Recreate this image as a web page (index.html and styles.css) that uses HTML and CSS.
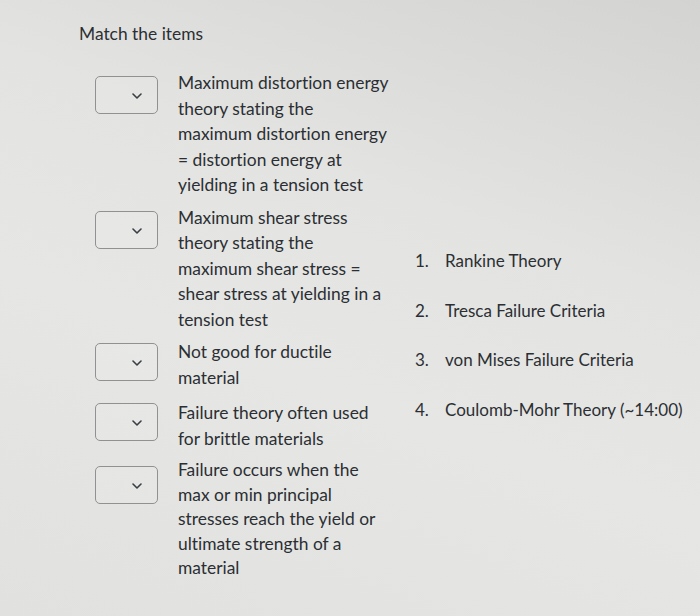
FILE: index.html
```html
<!DOCTYPE html>
<html lang="en">
<head>
<meta charset="utf-8">
<title>Match the items</title>
<link rel="stylesheet" href="styles.css">
</head>
<body>
<div class="page">
  <h1 class="title">Match the items</h1>
  <div class="match">
    <div class="prompts">
      <div class="row">
        <div class="select"><svg class="chev" width="10" height="6" viewBox="0 0 10 6"><path d="M1 1 L5 5 L9 1" fill="none" stroke="#3a3f44" stroke-width="1.6" stroke-linecap="round" stroke-linejoin="round"/></svg></div>
        <div class="text">Maximum distortion energy<br>theory stating the<br>maximum distortion energy<br>= distortion energy at<br>yielding in a tension test</div>
      </div>
      <div class="row">
        <div class="select"><svg class="chev" width="10" height="6" viewBox="0 0 10 6"><path d="M1 1 L5 5 L9 1" fill="none" stroke="#3a3f44" stroke-width="1.6" stroke-linecap="round" stroke-linejoin="round"/></svg></div>
        <div class="text">Maximum shear stress<br>theory stating the<br>maximum shear stress =<br>shear stress at yielding in a<br>tension test</div>
      </div>
      <div class="row">
        <div class="select select-up1"><svg class="chev" width="10" height="6" viewBox="0 0 10 6"><path d="M1 1 L5 5 L9 1" fill="none" stroke="#3a3f44" stroke-width="1.6" stroke-linecap="round" stroke-linejoin="round"/></svg></div>
        <div class="text">Not good for ductile<br>material</div>
      </div>
      <div class="row row-spaced">
        <div class="select select-up2"><svg class="chev" width="10" height="6" viewBox="0 0 10 6"><path d="M1 1 L5 5 L9 1" fill="none" stroke="#3a3f44" stroke-width="1.6" stroke-linecap="round" stroke-linejoin="round"/></svg></div>
        <div class="text">Failure theory often used<br>for brittle materials</div>
      </div>
      <div class="row">
        <div class="select select-low"><svg class="chev" width="10" height="6" viewBox="0 0 10 6"><path d="M1 1 L5 5 L9 1" fill="none" stroke="#3a3f44" stroke-width="1.6" stroke-linecap="round" stroke-linejoin="round"/></svg></div>
        <div class="text text-tight">Failure occurs when the<br>max or min principal<br>stresses reach the yield or<br>ultimate strength of a<br>material</div>
      </div>
    </div>
    <ol class="answers">
      <li class="answer"><span class="num">1.</span><span>Rankine Theory</span></li>
      <li class="answer"><span class="num">2.</span><span>Tresca Failure Criteria</span></li>
      <li class="answer"><span class="num">3.</span><span>von Mises Failure Criteria</span></li>
      <li class="answer"><span class="num">4.</span><span>Coulomb-Mohr Theory (~14:00)</span></li>
    </ol>
  </div>
</div>
</body>
</html>
```
FILE: styles.css
```css
html, body {
  margin: 0;
  padding: 0;
}
body {
  background: linear-gradient(200deg, #d3d3d2 0%, #e3e3e1 35%, #e6e6e4 60%, #e1e2e0 100%);
  color: #2b2f33;
  font-family: Lato, "Open Sans", sans-serif;
  font-variant-ligatures: none;
  width: 700px;
  height: 616px;
  overflow: hidden;
}
.page {
  padding: 22px 0 0 79px;
}
.title {
  margin: 0;
  font-size: 17.4px;
  font-weight: 400;
  line-height: 24px;
}
.match {
  display: flex;
  margin-top: 24px;
}
.prompts {
  display: flex;
  flex-direction: column;
  gap: 7px;
  padding-left: 16px;
}
.row {
  display: flex;
  gap: 20px;
  align-items: flex-start;
}
.row-spaced {
  margin-top: 3px;
}
.select {
  width: 61px;
  height: 36px;
  margin-top: 6px;
  border: 1px solid #8f9193;
  border-radius: 5px;
  background: rgba(255, 255, 255, 0.08);
  display: flex;
  align-items: center;
  justify-content: flex-end;
  flex: none;
  box-sizing: content-box;
}
.select-up1 {
  margin-top: 4px;
}
.select-up2 {
  margin-top: 3px;
}
.select-low {
  margin-top: 8px;
}
.select .chev {
  display: block;
  margin: 2px 15px 0 0;
}
.text {
  width: 214px;
  font-size: 17.4px;
  line-height: 25.5px;
  white-space: nowrap;
}
.text-tight {
  line-height: 24.5px;
}
.answers {
  list-style: none;
  margin: 178px 0 0 23px;
  padding: 0;
  display: flex;
  flex-direction: column;
  gap: 24.5px;
}
.answer {
  display: flex;
  font-size: 17px;
  line-height: 25px;
  white-space: nowrap;
}
.num {
  width: 30px;
  flex: none;
}
```
